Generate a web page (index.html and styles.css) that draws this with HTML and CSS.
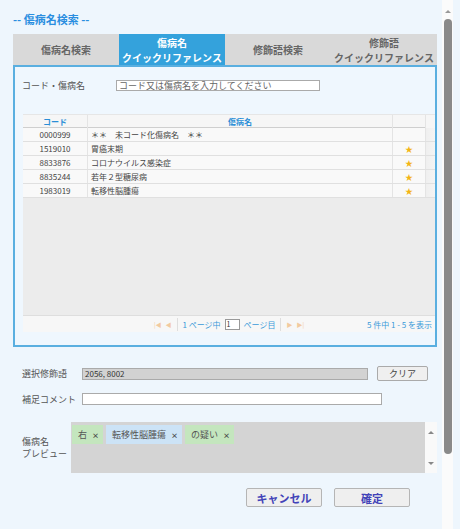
FILE: index.html
```html
<!DOCTYPE html>
<html lang="ja">
<head>
<meta charset="utf-8">
<title>傷病名検索</title>
<link rel="stylesheet" href="styles.css">
</head>
<body>
<div class="page">
  <div class="main">
    <div class="title">-- 傷病名検索 --</div>
    <div class="tabs">
      <div class="tab">傷病名検索</div>
      <div class="tab active">傷病名<br>クイックリファレンス</div>
      <div class="tab">修飾語検索</div>
      <div class="tab">修飾語<br>クイックリファレンス</div>
    </div>
    <div class="panel">
      <div class="search-row">
        <label class="search-label">コード・傷病名</label>
        <input class="search-input" type="text" placeholder="コード又は傷病名を入力してください">
      </div>
      <div class="grid">
        <div class="grow head">
          <div class="c c1">コード</div>
          <div class="c c2">傷病名</div>
          <div class="c c3"></div>
          <div class="c c4"></div>
        </div>
        <div class="grow">
          <div class="c c1">0000999</div>
          <div class="c c2 name">＊＊　未コード化傷病名　＊＊</div>
          <div class="c c3"></div>
          <div class="c c4"></div>
        </div>
        <div class="grow">
          <div class="c c1">1519010</div>
          <div class="c c2 name">胃癌末期</div>
          <div class="c c3 star">★</div>
          <div class="c c4"></div>
        </div>
        <div class="grow">
          <div class="c c1">8833876</div>
          <div class="c c2 name">コロナウイルス感染症</div>
          <div class="c c3 star">★</div>
          <div class="c c4"></div>
        </div>
        <div class="grow">
          <div class="c c1">8835244</div>
          <div class="c c2 name">若年２型糖尿病</div>
          <div class="c c3 star">★</div>
          <div class="c c4"></div>
        </div>
        <div class="grow">
          <div class="c c1">1983019</div>
          <div class="c c2 name">転移性脳腫瘍</div>
          <div class="c c3 star">★</div>
          <div class="c c4"></div>
        </div>
        <div class="filler"></div>
        <div class="pager">
          <div></div>
          <div class="pager-center">
            <span class="parrow">|◀</span>
            <span class="parrow">◀</span>
            <span class="psep"></span>
            <span>1 ページ中</span>
            <span class="pinput">1</span>
            <span>ページ目</span>
            <span class="psep"></span>
            <span class="parrow">▶</span>
            <span class="parrow">▶|</span>
          </div>
          <div class="pager-info">5 件中 1 - 5 を表示</div>
        </div>
      </div>
    </div>
    <div class="form">
      <div class="frow row-mod">
        <span class="flabel">選択修飾語</span>
        <input class="mod-input" type="text" value="2056, 8002" readonly>
        <button class="btn-clear" type="button">クリア</button>
      </div>
      <div class="frow row-comment">
        <span class="flabel">補足コメント</span>
        <input class="comment-input" type="text">
      </div>
      <div class="frow row-preview">
        <span class="plabel">傷病名<br>プレビュー</span>
        <div class="preview">
          <div class="chips">
            <span class="chip green">右<b>×</b></span>
            <span class="chip blue">転移性脳腫瘍<b>×</b></span>
            <span class="chip green">の疑い<b>×</b></span>
          </div>
          <div class="pscroll">
            <span class="tri-up"></span>
            <span class="tri-down"></span>
          </div>
        </div>
      </div>
      <div class="actions">
        <button class="btn" type="button">キャンセル</button>
        <button class="btn" type="button">確定</button>
      </div>
    </div>
  </div>
  <div class="vscroll">
    <span class="tri-up"></span>
    <span class="thumb"></span>
  </div>
</div>
</body>
</html>
```
FILE: styles.css
```css
* { box-sizing: border-box; }
html, body { margin: 0; padding: 0; }
body {
  width: 460px;
  height: 529px;
  overflow: hidden;
  background: #eef6fd;
  font-family: "Noto Sans CJK JP", "Noto Sans", sans-serif;
  font-size: 9px;
  color: #555;
}
.page { display: flex; height: 529px; }
.main { width: 442px; padding: 11px 5px 0 13px; }
.title {
  font-size: 11px;
  line-height: 16px;
  font-weight: bold;
  color: #2a8ee0;
}
.tabs { display: flex; margin-top: 7px; height: 31px; }
.tab {
  flex: 1;
  display: flex;
  align-items: center;
  justify-content: center;
  text-align: center;
  background: #d9d9d9;
  color: #666;
  font-weight: bold;
  font-size: 10px;
  line-height: 15px;
}
.tab.active { background: #34a2dc; color: #fff; }
.panel {
  height: 282px;
  border: 2px solid #5aafe0;
  background: #eff7fe;
  padding: 13px 0 0 0;
}
.search-row { display: flex; align-items: center; padding-left: 7px; height: 11px; }
.search-label { width: 94px; font-size: 9px; color: #555; }
.search-input {
  width: 204px;
  height: 11px;
  border: 1px solid #aaa;
  background: #fff;
  padding: 0 2px;
  font-family: inherit;
  font-size: 9px;
  color: #555;
}
.search-input::placeholder { color: #666; }
.grid { margin: 23px 0 0 8px; width: 412px; }
.grow {
  display: grid;
  grid-template-columns: 65px 305px 33px 9px;
  height: 14px;
  background: #f9f9f9;
  border-bottom: 1px solid #e0e0e0;
}
.grow.head { background: #f6f6f6; border-bottom: 1px solid #cfcfcf; border-top: 1px solid #e6e6e6; }
.c {
  display: flex;
  align-items: center;
  font-size: 8px;
  color: #444;
  line-height: 13px;
  border-right: 1px solid #e4e4e4;
}
.c1 { justify-content: center; }
.c2.name { padding-left: 3px; }
.c3 { justify-content: center; }
.c4 { border-right: none; background: linear-gradient(90deg, #efefef, #f4f4f4); }
.head .c { font-weight: bold; color: #2a8ed6; justify-content: center; }
.head .c4 { background: #f6f6f6; }
.star { color: #f3b516; font-size: 8px; }
.filler { height: 117px; background: #ececec; }
.pager {
  display: grid;
  grid-template-columns: 1fr auto 1fr;
  align-items: center;
  height: 17px;
  background: #f7f7f7;
  border-top: 1px solid #dedede;
  font-size: 8px;
  color: #3a9ad9;
}
.pager-center { display: flex; align-items: center; gap: 4px; }
.parrow { color: #f2caa0; font-size: 6px; }
.psep { width: 1px; height: 13px; background: #dedede; margin: 0 1px; }
.pinput {
  width: 15px;
  height: 11px;
  border: 1px solid #999;
  background: #fff;
  color: #333;
  font-size: 7px;
  line-height: 9px;
  padding-left: 1px;
}
.pager-info { justify-self: end; padding-right: 3px; }
.form { padding-left: 9px; }
.frow { display: flex; align-items: center; }
.flabel { width: 60px; font-size: 9px; color: #555; }
.row-mod { margin-top: 19px; height: 15px; }
.mod-input {
  width: 286px;
  height: 12px;
  border: 1px solid #aaa;
  background: #d2d2d2;
  padding: 0 2px;
  font-family: inherit;
  font-size: 8px;
  color: #333;
}
.btn-clear {
  margin-left: 9px;
  width: 51px;
  height: 15px;
  padding: 0;
  border: 1px solid #aaa;
  border-radius: 2px;
  background: #efefef;
  font-family: inherit;
  font-size: 9px;
  color: #444;
}
.row-comment { margin-top: 12px; height: 12px; }
.comment-input {
  width: 300px;
  height: 12px;
  border: 1px solid #aaa;
  background: #fff;
  padding: 0;
}
.row-preview { margin-top: 17px; }
.plabel { width: 49px; font-size: 9px; line-height: 12px; color: #555; }
.preview { display: flex; width: 366px; height: 51px; }
.chips {
  flex: 1;
  background: #d4d4d4;
  display: flex;
  align-items: flex-start;
  gap: 3px;
  padding: 3px 1px;
}
.chip {
  display: flex;
  align-items: center;
  height: 19px;
  padding: 0 4px 0 6px;
  font-size: 9px;
  color: #555;
}
.chip b { font-size: 7px; color: #444; margin-left: 5px; }
.chip.green { background: #c4e6be; }
.chip.blue { background: #cce3f6; }
.pscroll {
  width: 12px;
  background: #f9f9f9;
  display: flex;
  flex-direction: column;
  align-items: center;
  justify-content: space-between;
  padding: 9px 0 8px;
}
.tri-up {
  width: 0; height: 0;
  border-left: 3px solid transparent;
  border-right: 3px solid transparent;
  border-bottom: 3px solid #888;
}
.tri-down {
  width: 0; height: 0;
  border-left: 3px solid transparent;
  border-right: 3px solid transparent;
  border-top: 3px solid #888;
}
.actions { display: flex; justify-content: flex-end; gap: 12px; margin-top: 15px; padding-right: 27px; }
.btn {
  width: 76px;
  height: 19px;
  padding: 0;
  border: 1px solid #b5b5b5;
  border-radius: 2px;
  background: #efefef;
  font-family: inherit;
  font-size: 11px;
  font-weight: bold;
  color: #4242b8;
}
.vscroll {
  width: 11px;
  background: #fbfbfb;
  display: flex;
  flex-direction: column;
  align-items: center;
  padding-top: 10px;
}
.vscroll .tri-up { border-bottom-color: #999; }
.thumb {
  margin-top: 6px;
  width: 8px;
  height: 435px;
  border-radius: 4px;
  background: #8a8a8a;
}
```
